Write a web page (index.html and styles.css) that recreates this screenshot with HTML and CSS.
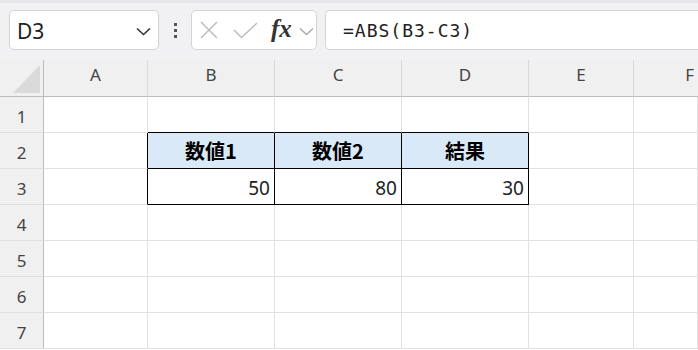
FILE: index.html
```html
<!DOCTYPE html>
<html lang="ja">
<head>
    <meta charset="UTF-8">
    <title>ABS関数</title>
    <link rel="stylesheet" href="styles.css">
</head>
<body>
    <div class="toolbar">
        <div class="namebox">
            <span class="cellref">D3</span>
            <svg class="chev" width="15" height="9" viewBox="0 0 15 9"><path d="M1 1.5 L7.5 7.5 L14 1.5" fill="none" stroke="#333" stroke-width="1.6"/></svg>
        </div>
        <div class="dots"><i></i><i></i><i></i></div>
        <div class="fxbox">
            <svg width="18" height="18" viewBox="0 0 18 18"><path d="M1 1 L17 17 M17 1 L1 17" stroke="#bdbdbd" stroke-width="1.5"/></svg>
            <svg width="25" height="17" viewBox="0 0 25 17"><path d="M1 8 L8.5 15.5 L24 1" fill="none" stroke="#bdbdbd" stroke-width="1.5"/></svg>
            <span class="fx">fx</span>
            <svg width="15" height="9" viewBox="0 0 15 9"><path d="M1 1.5 L7.5 7.5 L14 1.5" fill="none" stroke="#a8a8a8" stroke-width="1.4"/></svg>
        </div>
        <div class="formula">=ABS(B3-C3)</div>
    </div>

    <div class="sheet">
        <div class="h corner"><svg width="27" height="28" viewBox="0 0 27 28"><path d="M0 28 L27 28 L27 0 Z" fill="#dadada"/></svg></div>
        <div class="h">A</div>
        <div class="h">B</div>
        <div class="h">C</div>
        <div class="h">D</div>
        <div class="h">E</div>
        <div class="h last">F</div>

        <div class="r">1</div>
        <div class="c"></div>
        <div class="c above"></div>
        <div class="c above"></div>
        <div class="c above"></div>
        <div class="c"></div>
        <div class="c"></div>

        <div class="r">2</div>
        <div class="c before"></div>
        <div class="c box th">数値1</div>
        <div class="c box th">数値2</div>
        <div class="c box th">結果</div>
        <div class="c"></div>
        <div class="c"></div>

        <div class="r">3</div>
        <div class="c before"></div>
        <div class="c box num">50</div>
        <div class="c box num">80</div>
        <div class="c box num">30</div>
        <div class="c"></div>
        <div class="c"></div>

        <div class="r">4</div>
        <div class="c"></div><div class="c"></div><div class="c"></div><div class="c"></div><div class="c"></div><div class="c"></div>
        <div class="r">5</div>
        <div class="c"></div><div class="c"></div><div class="c"></div><div class="c"></div><div class="c"></div><div class="c"></div>
        <div class="r">6</div>
        <div class="c"></div><div class="c"></div><div class="c"></div><div class="c"></div><div class="c"></div><div class="c"></div>
        <div class="r">7</div>
        <div class="c"></div><div class="c"></div><div class="c"></div><div class="c"></div><div class="c"></div><div class="c"></div>
    </div>
</body>
</html>
```

FILE: styles.css
```css
body {
    margin: 0;
    width: 698px;
    height: 350px;
    overflow: hidden;
    background: #fff;
    font-family: "Noto Sans", "Noto Sans CJK JP", sans-serif;
    color: #222;
}
.toolbar {
    height: 60px;
    box-sizing: border-box;
    padding: 7px 0 10px 9px;
    display: flex;
    background: #f1f1f3;
    border-top: 3px solid #e7e7ea;
}
.namebox {
    width: 150px;
    box-sizing: border-box;
    background: #fff;
    border: 1px solid #d4d4d4;
    border-radius: 5px;
    display: flex;
    align-items: center;
    justify-content: space-between;
    padding: 0 7px 0 7px;
}
.cellref {
    font-size: 21px;
    color: #222;
    margin-top: 1px;
}
.chev {
    margin-top: 2px;
}
.dots {
    width: 32px;
    display: flex;
    flex-direction: column;
    align-items: center;
    justify-content: center;
    gap: 3px;
}
.dots i {
    display: block;
    width: 3px;
    height: 3px;
    background: #555;
}
.fxbox {
    width: 126px;
    box-sizing: border-box;
    background: #fff;
    border: 1px solid #d4d4d4;
    border-radius: 5px;
    display: flex;
    align-items: center;
    padding: 0 0 0 8px;
}
.fxbox svg:nth-child(2) {
    margin-left: 15px;
}
.fx {
    font-family: "Liberation Serif", serif;
    font-style: italic;
    font-weight: bold;
    font-size: 25px;
    color: #333;
    margin-left: 13px;
    margin-top: -2px;
}
.fxbox svg:last-child {
    margin-left: 7px;
    margin-top: 2px;
}
.formula {
    flex: 1;
    min-width: 0;
    margin-left: 8px;
    background: #fff;
    border: 1px solid #d4d4d4;
    border-right: none;
    border-radius: 5px 0 0 5px;
    display: flex;
    align-items: center;
    padding-left: 17px;
    font-family: "DejaVu Sans Mono", monospace;
    font-size: 18px;
    letter-spacing: 1px;
    color: #222;
}
.sheet {
    display: grid;
    grid-template-columns: 44px 104px 127px 127px 127px 105px 64px;
    grid-template-rows: 37px;
    grid-auto-rows: 36px;
}
.sheet > div {
    box-sizing: border-box;
    display: flex;
    align-items: center;
}
.h {
    background: #f0f0f0;
    border-right: 1px solid #d8d8d8;
    border-bottom: 1px solid #bcbcbc;
    justify-content: center;
    padding-bottom: 8px;
    font-size: 17px;
    color: #444;
}
.h.last {
    justify-content: flex-end;
    padding-right: 4px;
    border-right: none;
}
.corner {
    justify-content: flex-end !important;
    align-items: flex-end !important;
    padding: 0 3px 3px 0;
    border-right: 1px solid #bcbcbc;
}
.r {
    background: #f0f0f0;
    border-right: 1px solid #bcbcbc;
    border-bottom: 1px solid #e0e0e0;
    justify-content: center;
    padding-top: 4px;
    font-size: 17px;
    color: #444;
}
.c {
    border-right: 1px solid #e1e1e1;
    border-bottom: 1px solid #e1e1e1;
}
.c.above {
    border-bottom-color: #000;
}
.c.before {
    border-right-color: #000;
}
.c.box {
    border-right-color: #000;
    border-bottom-color: #000;
}
.th {
    background: #dae9f8;
    justify-content: center;
    font-family: "Noto Sans CJK JP", sans-serif;
    font-weight: bold;
    font-size: 20px;
    color: #000;
}
.num {
    justify-content: flex-end;
    padding-right: 4px;
    padding-top: 3px;
    font-size: 19px;
    color: #222;
}
```
